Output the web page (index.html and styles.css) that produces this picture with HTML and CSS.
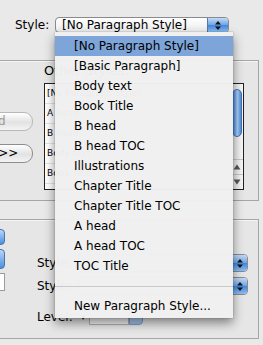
FILE: index.html
```html
<!DOCTYPE html>
<html lang="en">
<head>
  <meta charset="UTF-8" />
  <title>Paragraph Style</title>
  <link rel="stylesheet" href="styles.css">
</head>
<body>
  <div class="dialog">
    <div class="style-row">
      <span class="label">Style:</span>
      <div class="select">
        <span class="select-text">[No Paragraph Style]</span>
        <span class="arrows">
          <svg width="8" height="11" viewBox="0 0 8 11"><path d="M4 1 L7 4.5 L1 4.5 Z M4 10 L7 6.5 L1 6.5 Z" fill="#111"/></svg>
        </span>
      </div>
    </div>

    <div class="group group-top">
      <div class="btn-col">
        <div class="btn disabled">&lt;&lt; Add</div>
        <div class="btn">Remove &gt;&gt;</div>
      </div>
      <div class="list-col">
        <div class="list-title">Other Styles:</div>
        <div class="list">
          <div class="rows">
            <div class="row">[No Paragraph Style]</div>
            <div class="row">A head</div>
            <div class="row">B head</div>
            <div class="row">Body text</div>
            <div class="row">Book Title</div>
          </div>
          <div class="scroll">
            <div class="thumb"></div>
            <div class="track"></div>
            <div class="arrow">
              <svg width="8" height="6" viewBox="0 0 8 6"><path d="M4 0.5 L7.5 5.5 L0.5 5.5 Z" fill="#555"/></svg>
            </div>
            <div class="arrow">
              <svg width="8" height="6" viewBox="0 0 8 6"><path d="M4 5.5 L7.5 0.5 L0.5 0.5 Z" fill="#555"/></svg>
            </div>
          </div>
        </div>
      </div>
    </div>

    <div class="group group-bottom">
      <div class="edge-col">
        <div class="blue-edge"></div>
        <div class="blue-edge tall"></div>
        <div class="white-edge"></div>
      </div>
      <div class="fields">
        <div class="field-row">
          <span class="flabel">Style:</span>
          <div class="popup"><span class="popup-btn"><svg width="8" height="11" viewBox="0 0 8 11"><path d="M4 1 L7 4.5 L1 4.5 Z M4 10 L7 6.5 L1 6.5 Z" fill="#111"/></svg></span></div>
        </div>
        <div class="field-row">
          <span class="flabel">Style:</span>
          <div class="popup"><span class="popup-btn"><svg width="8" height="11" viewBox="0 0 8 11"><path d="M4 1 L7 4.5 L1 4.5 Z M4 10 L7 6.5 L1 6.5 Z" fill="#111"/></svg></span></div>
        </div>
        <div class="field-row level">
          <span class="flabel">Level:</span>
          <div class="stepper"><span class="step-arrow">&#9662;</span><span class="step-box"></span><span class="step-blue"></span></div>
        </div>
      </div>
    </div>
  </div>

  <!-- open popup menu -->
  <div class="menu">
    <div class="item active">[No Paragraph Style]</div>
    <div class="item">[Basic Paragraph]</div>
    <div class="item">Body text</div>
    <div class="item">Book Title</div>
    <div class="item">B head</div>
    <div class="item">B head TOC</div>
    <div class="item">Illustrations</div>
    <div class="item">Chapter Title</div>
    <div class="item">Chapter Title TOC</div>
    <div class="item">A head</div>
    <div class="item">A head TOC</div>
    <div class="item">TOC Title</div>
    <div class="sep"></div>
    <div class="item">New Paragraph Style...</div>
  </div>
</body>
</html>
```

FILE: styles.css
```css
body {
  margin: 0;
  width: 263px;
  height: 345px;
  overflow: hidden;
  position: relative;
  background: #e9e9e9;
  font-family: "DejaVu Sans", sans-serif;
  color: #000;
}
.dialog {
  width: 263px;
}
.style-row {
  display: flex;
  align-items: center;
  padding: 17px 0 0 15px;
  height: 16px;
}
.label {
  font-size: 12px;
  width: 40px;
}
.select {
  display: flex;
  align-items: center;
  width: 174px;
  height: 16px;
  border: 1px solid #8a8a8a;
  border-radius: 4px;
  background: linear-gradient(#ffffff, #ececec);
  box-sizing: border-box;
}
.select-text {
  flex: 1;
  font-size: 12px;
  padding-left: 6px;
  line-height: 14px;
}
.arrows {
  width: 20px;
  height: 100%;
  display: flex;
  align-items: center;
  justify-content: center;
  background: linear-gradient(#c3daf5, #6ea4e6 50%, #3f85dc 51%, #8cc0f3);
  border-left: 1px solid #5577aa;
  border-radius: 0 3px 3px 0;
}

/* group boxes */
.group {
  border: 1px solid #a6a6a6;
  background: #e6e6e6;
  box-shadow: inset 1px 1px 0 #f6f6f6;
  margin-left: -2px;
  width: 261px;
  box-sizing: border-box;
  display: flex;
}
.group-top {
  margin-top: 27px;
  height: 141px;
}
.group-bottom {
  margin-top: 18px;
  height: 120px;
}

.btn-col {
  width: 45px;
  padding-top: 51px;
  display: flex;
  flex-direction: column;
  gap: 13px;
}
.btn {
  margin-left: -68px;
  width: 100px;
  height: 17px;
  border: 1px solid #8d8d8d;
  border-radius: 9px;
  background: linear-gradient(#ffffff, #e2e2e2 55%, #f4f4f4);
  font-size: 12px;
  line-height: 17px;
  text-align: center;
  white-space: nowrap;
  flex-shrink: 0;
}
.btn.disabled {
  color: #9a9a9a;
  border-color: #b8b8b8;
}
.list-col {
  display: flex;
  flex-direction: column;
}
.list-title {
  font-size: 13px;
  height: 22px;
  line-height: 20px;
}
.list {
  width: 200px;
  height: 107px;
  border: 1px solid #222;
  background: #fff;
  box-sizing: border-box;
  display: flex;
}
.rows {
  flex: 1;
}
.row {
  height: 19px;
  border-bottom: 1px solid #e4e4e4;
  font-size: 9px;
  line-height: 19px;
  padding-left: 2px;
  white-space: nowrap;
  overflow: hidden;
}
.scroll {
  width: 15px;
  display: flex;
  flex-direction: column;
  background: linear-gradient(90deg, #dcdcdc, #f8f8f8);
}
.thumb {
  margin: 5px 1px 0 4px;
  height: 46px;
  border-radius: 5px;
  background: linear-gradient(90deg, #3f7fd6, #a9d0f7 55%, #4a8ce0);
  border: 1px solid #4572b5;
}
.track {
  flex: 1;
}
.arrow {
  height: 14px;
  display: flex;
  align-items: center;
  justify-content: center;
  border-top: 1px solid #c6c6c6;
  padding-left: 3px;
}

/* bottom group */
.edge-col {
  width: 38px;
  padding-top: 9px;
  display: flex;
  flex-direction: column;
  gap: 4px;
}
.blue-edge {
  margin-left: -10px;
  width: 14px;
  height: 14px;
  border: 1px solid #4d73ad;
  border-radius: 4px;
  background: linear-gradient(#b9d6f6, #4a8fe2);
}
.blue-edge.tall {
  height: 18px;
}
.white-edge {
  margin-left: -10px;
  width: 14px;
  height: 16px;
  border: 1px solid #9c9c9c;
  background: #fff;
}
.fields {
  flex: 1;
  padding-top: 34px;
  display: flex;
  flex-direction: column;
  gap: 5px;
}
.field-row {
  display: flex;
  align-items: center;
  height: 18px;
}
.flabel {
  font-size: 12px;
  width: 40px;
}
.popup {
  margin-left: auto;
  margin-right: 10px;
  width: 170px;
  height: 18px;
  border: 1px solid #8a8a8a;
  border-radius: 4px;
  background: #fff;
  display: flex;
  justify-content: flex-end;
  box-sizing: border-box;
}
.popup-btn {
  width: 14px;
  display: flex;
  align-items: center;
  justify-content: center;
  background: linear-gradient(#c3daf5, #6ea4e6 50%, #3f85dc 51%, #8cc0f3);
  border-left: 1px solid #5577aa;
  border-radius: 0 3px 3px 0;
}
.field-row.level {
  margin-top: 8px;
}
.stepper {
  display: flex;
  align-items: center;
  height: 16px;
}
.step-arrow {
  font-size: 9px;
  width: 12px;
  text-align: center;
}
.step-box {
  width: 38px;
  height: 14px;
  border: 1px solid #b0b0b0;
  background: #f4f4f4;
}
.step-blue {
  width: 12px;
  height: 14px;
  border: 1px solid #7d9bc7;
  border-radius: 0 4px 4px 0;
  background: linear-gradient(#d4e4f6, #9dbfe8);
}

/* open menu */
.menu {
  position: absolute;
  left: 55px;
  top: 32px;
  width: 178px;
  padding: 4px 0 2px;
  background: rgba(240, 240, 240, 0.98);
  box-shadow: 0 5px 10px rgba(0, 0, 0, 0.45), 0 0 1px rgba(0, 0, 0, 0.4);
}
.item {
  height: 20px;
  line-height: 20px;
  padding-left: 19px;
  font-size: 12px;
  white-space: nowrap;
}
.item.active {
  background: #7ea5d9;
}
.sep {
  height: 20px;
  display: flex;
  align-items: center;
}
.sep::after {
  content: "";
  display: block;
  width: 100%;
  height: 1px;
  background: #c9c9c9;
}
```
